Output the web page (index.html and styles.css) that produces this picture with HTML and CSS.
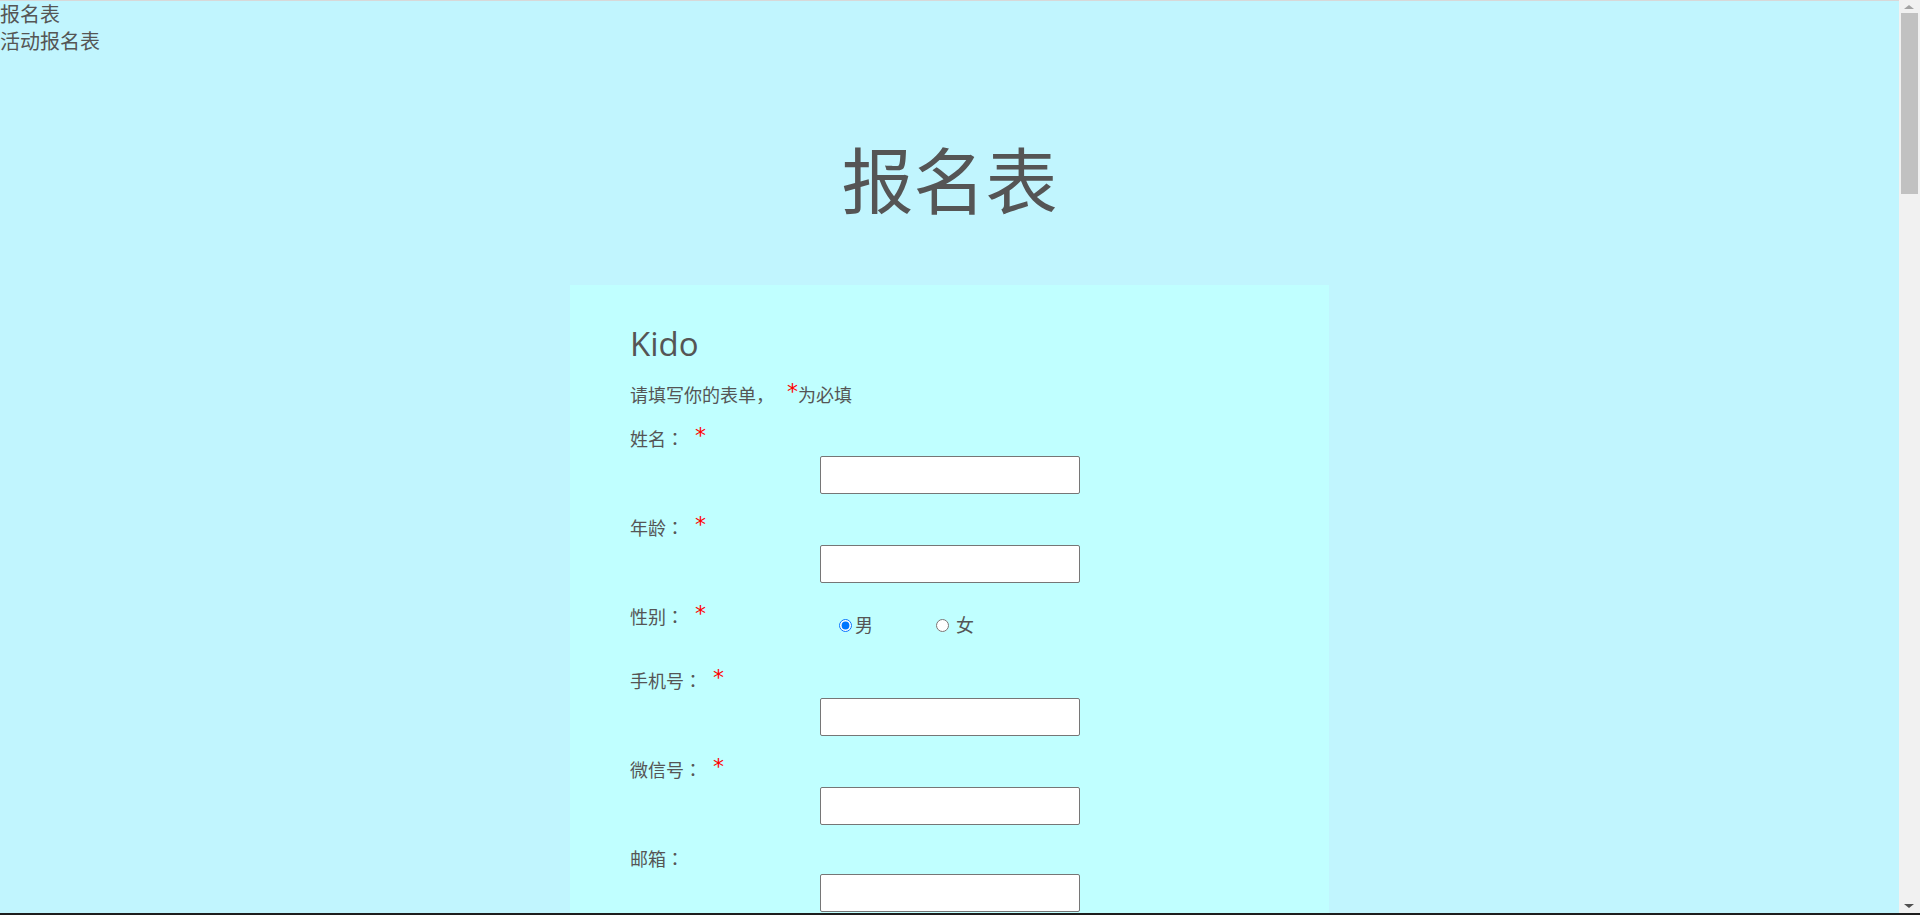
FILE: index.html
```html
<!DOCTYPE html>
<html lang="zh-CN">
<head>
<meta charset="utf-8">
<title>报名表</title>
<link rel="stylesheet" href="styles.css">
</head>
<body>
<div class="head-text">
  <div class="line">报名表</div>
  <div class="line">活动报名表</div>
</div>
<h1 class="title">报名表</h1>
<form class="card">
  <h2 class="brand">Kido</h2>
  <p class="intro">请填写你的表单， <span class="star">*</span>为必填</p>

  <div class="row">
    <div class="label">姓名<span class="colon" lang="zh-Hant">：</span><span class="star">*</span></div>
    <div class="field"><input class="text" type="text"></div>
  </div>
  <div class="row">
    <div class="label">年龄<span class="colon" lang="zh-Hant">：</span><span class="star">*</span></div>
    <div class="field"><input class="text" type="text"></div>
  </div>
  <div class="row row-radio">
    <div class="label label-col">性别<span class="colon" lang="zh-Hant">：</span><span class="star">*</span></div>
    <div class="radios">
      <label class="opt"><input class="radio" type="radio" name="sex" checked>男</label>
      <label class="opt opt-2"><input class="radio" type="radio" name="sex"> 女</label>
    </div>
  </div>
  <div class="row">
    <div class="label">手机号<span class="colon" lang="zh-Hant">：</span><span class="star">*</span></div>
    <div class="field"><input class="text" type="text"></div>
  </div>
  <div class="row">
    <div class="label">微信号<span class="colon" lang="zh-Hant">：</span><span class="star">*</span></div>
    <div class="field"><input class="text" type="text"></div>
  </div>
  <div class="row">
    <div class="label label-plain">邮箱<span class="colon" lang="zh-Hant">：</span></div>
    <div class="field"><input class="text" type="text"></div>
  </div>
  <div class="row">
    <div class="label label-plain">学校<span class="colon" lang="zh-Hant">：</span></div>
    <div class="field"><input class="text" type="text"></div>
  </div>
  <div class="row">
    <div class="label label-plain">地址<span class="colon" lang="zh-Hant">：</span></div>
    <div class="field"><input class="text" type="text"></div>
  </div>
  <div class="row">
    <div class="label label-plain">紧急联系人<span class="colon" lang="zh-Hant">：</span></div>
    <div class="field"><input class="text" type="text"></div>
  </div>
  <div class="row">
    <div class="label label-plain">备注<span class="colon" lang="zh-Hant">：</span></div>
    <div class="field"><textarea class="area"></textarea></div>
  </div>
  <div class="row">
    <div class="field"><button class="submit" type="button">提交</button></div>
  </div>
</form>

<div class="scrollbar" aria-hidden="true">
  <div class="sb-up"></div>
  <div class="sb-thumb"></div>
  <div class="sb-down"></div>
</div>
<div class="window-edge" aria-hidden="true"></div>
</body>
</html>
```
FILE: styles.css
```css
html {
  background: #c1f5fe;
}
body {
  margin: 0 21px 0 0;
  color: #555555;
  font-family: "Noto Sans CJK SC", "Open Sans", sans-serif;
  border-top: 1px solid #d8d8d8;
  padding-bottom: 2400px;
}
.head-text {
  font-size: 20px;
  line-height: 27px;
  margin-top: -1px;
}
.title {
  margin: 75px 0 0;
  font-size: 72px;
  font-weight: normal;
  line-height: 95px;
  text-align: center;
}
.card {
  display: block;
  width: 759px;
  box-sizing: border-box;
  margin: 61px auto 0;
  padding: 37px 60px 80px;
  background: #c0ffff;
}
.brand {
  margin: 0;
  font-family: "Open Sans", "Noto Sans CJK SC", sans-serif;
  font-size: 33px;
  font-weight: normal;
  line-height: 44px;
}
.intro {
  margin: 15px 0 0;
  font-size: 18px;
  line-height: 27px;
}
.intro .star {
  margin-left: 9px;
}
.colon {
  font-family: "Noto Sans CJK TC", "Noto Sans CJK SC", sans-serif;
}
.star {
  color: #ff0000;
  font-family: "DejaVu Sans", sans-serif;
  font-size: 22px;
  vertical-align: top;
  line-height: 22px;
}
.label .star {
  margin-left: 11px;
}
.row {
  margin-top: 17px;
  margin-bottom: 4px;
}
.row + .row {
  margin-top: 20px;
}
.label {
  font-size: 18px;
  line-height: 27px;
  height: 27px;
}
.label-plain {
  height: 25px;
}
.field {
  margin-top: 4px;
  margin-left: 190px;
}
.text {
  display: block;
  box-sizing: border-box;
  width: 260px;
  height: 38px;
  margin: 0;
  border: 1px solid #767676;
  border-radius: 2px;
  background: #ffffff;
}
.row-radio {
  display: flex;
  height: 44px;
}
.label-col {
  width: 190px;
  flex: none;
}
.radios {
  margin-top: 8px;
  padding-left: 14px;
  font-size: 18px;
  line-height: 27px;
}
.opt-2 {
  margin-left: 54px;
}
.radio {
  width: 13px;
  height: 13px;
  margin: 3px 3px 0 5px;
}
.area {
  display: block;
  box-sizing: border-box;
  width: 260px;
  height: 120px;
  border: 1px solid #767676;
  border-radius: 2px;
}
.submit {
  font-family: "Noto Sans CJK SC", sans-serif;
  font-size: 18px;
  width: 120px;
  height: 40px;
  color: #555555;
  background: #ffffff;
  border: 1px solid #767676;
  border-radius: 2px;
}
.scrollbar {
  position: fixed;
  top: 0;
  right: 0;
  bottom: 0;
  width: 21px;
  background: #f1f1f1;
}
.sb-up,
.sb-down {
  position: absolute;
  left: 5px;
  width: 0;
  height: 0;
  border-left: 5px solid transparent;
  border-right: 5px solid transparent;
}
.sb-up {
  top: 5px;
  border-bottom: 4px solid #a3a3a3;
}
.sb-down {
  bottom: 7px;
  border-top: 4px solid #505050;
}
.sb-thumb {
  position: absolute;
  top: 13px;
  left: 2px;
  width: 17px;
  height: 181px;
  background: #c1c1c1;
}
.window-edge {
  position: fixed;
  left: 0;
  right: 0;
  bottom: 0;
  height: 2px;
  background: #1e1e1e;
}
```
